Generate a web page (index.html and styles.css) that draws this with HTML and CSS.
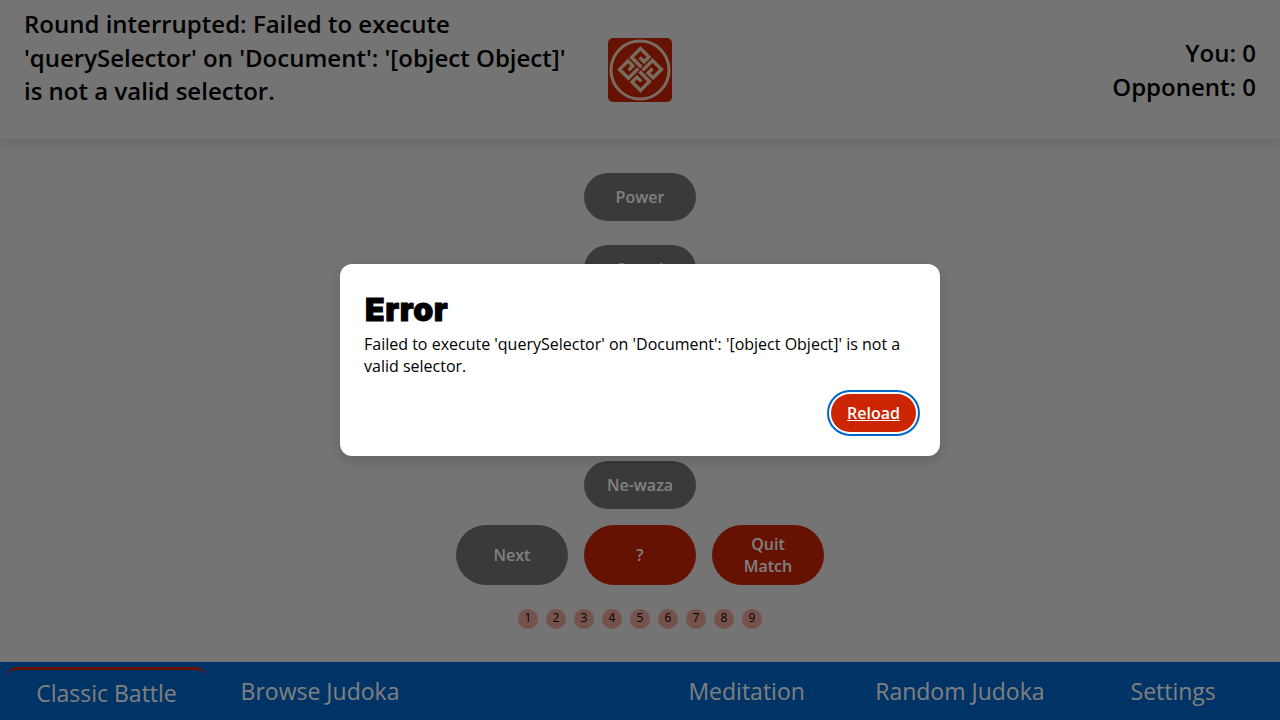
FILE: index.html
```html
<!DOCTYPE html>
<html lang="en">
<head>
<meta charset="utf-8">
<title>Classic Battle</title>
<link rel="stylesheet" href="styles.css">
</head>
<body>
<div class="page">
  <header class="header">
    <p class="message">Round interrupted: Failed to execute 'querySelector' on 'Document': '[object Object]' is not a valid selector.</p>
    <svg class="logo" viewBox="0 0 64 64">
      <rect width="64" height="64" rx="5" fill="#cb2504"/>
      <g fill="none" stroke="#f0d8c0">
        <circle cx="32" cy="32" r="29" stroke-width="3"/>
        <g transform="translate(32.5 31.4) rotate(45)" stroke-width="3.4">
          <path id="hook" d="M-.8 -2.2H-14.8V-14.8H-2.9V-7.9H-9"/>
          <use href="#hook" transform="rotate(90)"/>
          <use href="#hook" transform="rotate(180)"/>
          <use href="#hook" transform="rotate(270)"/>
        </g>
      </g>
    </svg>
    <p class="score"><span>You: 0</span><span>Opponent: 0</span></p>
  </header>
  <main class="main">
    <div class="stats">
      <button class="btn stat">Power</button>
      <button class="btn stat">Speed</button>
      <div class="covered"></div>
      <button class="btn stat">Ne-waza</button>
    </div>
    <div class="actions">
      <button class="btn action off">Next</button>
      <button class="btn action">?</button>
      <button class="btn action">Quit Match</button>
    </div>
    <div class="rounds">
      <span>1</span><span>2</span><span>3</span><span>4</span><span>5</span><span>6</span><span>7</span><span>8</span><span>9</span>
    </div>
  </main>
  <nav class="nav">
    <a class="link current">Classic Battle</a>
    <a class="link">Browse Judoka</a>
    <a class="link meditation">Meditation</a>
    <a class="link">Random Judoka</a>
    <a class="link">Settings</a>
  </nav>
</div>
<div class="backdrop">
  <section class="dialog">
    <h2 class="title">Error</h2>
    <p class="detail">Failed to execute 'querySelector' on 'Document': '[object Object]' is not a valid selector.</p>
    <div class="buttons"><button class="reload">Reload</button></div>
  </section>
</div>
</body>
</html>
```
FILE: styles.css
```css
* { box-sizing: border-box; }
body { margin: 0; font-family: "Open Sans", sans-serif; font-size: 16px; color: #000; overflow: hidden; }
p, h2 { margin: 0; }
.page { height: 720px; display: flex; flex-direction: column; background: #e8e8e8; }
.header { height: 139px; flex: none; display: grid; grid-template-columns: 1fr 64px 1fr; column-gap: 24px; padding: 7px 24px 0; box-shadow: 0 4px 12px rgba(0,0,0,.1); font-size: 24px; font-weight: 600; line-height: 33.6px; }
.logo { width: 64px; height: 64px; margin-top: 31px; }
.score { display: flex; flex-direction: column; text-align: right; padding-top: 29px; }
.main { flex: 1; display: flex; flex-direction: column; align-items: center; padding-top: 34px; }
.stats { display: flex; flex-direction: column; gap: 24px; }
.covered { height: 120px; }
.btn { width: 112px; border: 0; padding: 8px 16px; font: 600 16px/22px "Open Sans", sans-serif; color: #fff; background: #cb2504; }
.stat { height: 48px; border-radius: 24px; background: #757575; }
.actions { display: flex; gap: 16px; margin-top: 16px; }
.action { height: 60px; border-radius: 30px; }
.off { background: #757575; }
.rounds { display: flex; gap: 8px; margin-top: 24px; }
.rounds span { width: 20px; height: 20px; border-radius: 50%; background: #eba497; font-size: 12px; line-height: 18px; text-align: center; }
.nav { height: 58px; display: flex; background: #0066cc; color: #fff; font-size: 23px; line-height: 58px; }
.link { white-space: nowrap; }
.current { width: 199px; height: 54px; margin: 5px 34.6px 0 7px; border-top: 3px solid #cb2504; border-radius: 10px; text-align: center; line-height: 46px; }
.meditation { margin: 0 70.4px 0 289px; }
.link:last-child { margin-left: 86px; }
.backdrop { position: absolute; inset: 0; display: flex; align-items: center; justify-content: center; background: rgba(0,0,0,.5); }
.dialog { width: 600px; height: 192px; padding: 24px; background: #fff; border-radius: 12px; box-shadow: 0 4px 12px rgba(0,0,0,.15); }
.title { font: 900 32px/42px Inter, sans-serif; letter-spacing: .6px; padding: 1px 0 0 1px; -webkit-text-stroke: 1px #000; }
.detail { line-height: 22.4px; margin-top: 2px; }
.buttons { display: flex; justify-content: flex-end; margin-top: 16px; }
.reload { width: 85px; height: 38px; border: 0; border-radius: 19px; background: #cb2504; color: #fff; font: 600 16px/22px "Open Sans", sans-serif; text-decoration: underline; outline: 2px solid #0066cc; outline-offset: 2px; padding: 0; }
```
